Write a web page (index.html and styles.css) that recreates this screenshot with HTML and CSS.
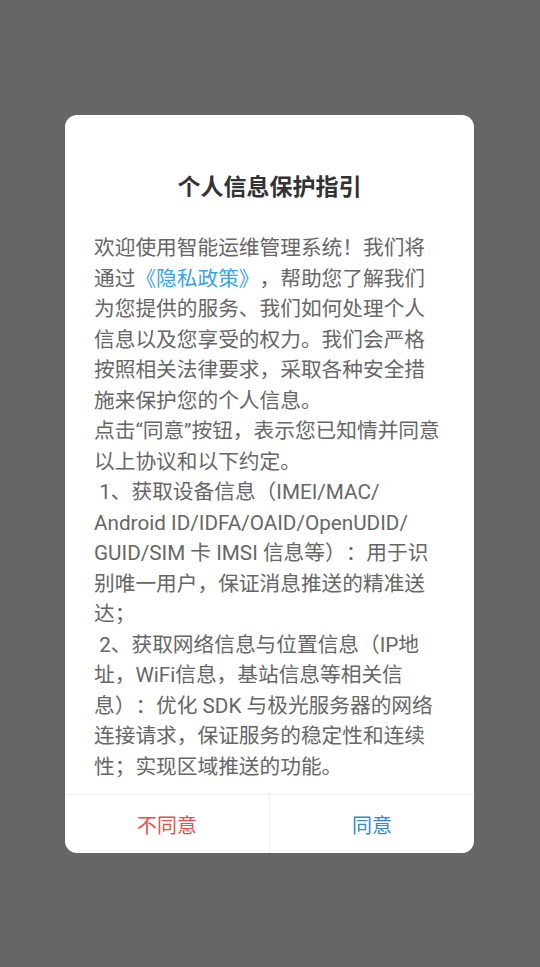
FILE: index.html
```html
<!DOCTYPE html>
<html lang="zh-CN">
<head>
<meta charset="utf-8">
<title>个人信息保护指引</title>
<link rel="stylesheet" href="styles.css">
</head>
<body>
<div class="dialog">
  <h1 class="title">个人信息保护指引</h1>
  <div class="content">
    <span class="line">欢迎使用智能运维管理系统！我们将</span>
    <span class="line">通过<a class="link">《隐私政策》</a>，帮助您了解我们</span>
    <span class="line">为您提供的服务、我们如何处理个人</span>
    <span class="line">信息以及您享受的权力。我们会严格</span>
    <span class="line">按照相关法律要求，采取各种安全措</span>
    <span class="line">施来保护您的个人信息。</span>
    <span class="line">点击“同意”按钮，表示您已知情并同意</span>
    <span class="line">以上协议和以下约定。</span>
    <span class="line"> 1、获取设备信息（IMEI/MAC/</span>
    <span class="line">Android ID/IDFA/OAID/OpenUDID/</span>
    <span class="line">GUID/SIM 卡 IMSI 信息等）：用于识</span>
    <span class="line">别唯一用户，保证消息推送的精准送</span>
    <span class="line">达；</span>
    <span class="line"> 2、获取网络信息与位置信息（IP地</span>
    <span class="line">址，WiFi信息，基站信息等相关信</span>
    <span class="line">息）：优化 SDK 与极光服务器的网络</span>
    <span class="line">连接请求，保证服务的稳定性和连续</span>
    <span class="line">性；实现区域推送的功能。</span>
  </div>
  <div class="actions">
    <button class="btn btn-decline">不同意</button>
    <button class="btn btn-accept">同意</button>
  </div>
</div>
</body>
</html>
```
FILE: styles.css
```css
html, body {
  margin: 0;
  padding: 0;
}
body {
  background: #666666;
  width: 540px;
  height: 967px;
  padding-top: 115px;
  box-sizing: border-box;
  font-family: Roboto, "Noto Sans CJK SC", sans-serif;
  text-spacing-trim: space-all;
}
.dialog {
  margin-left: 65px;
  width: 409px;
  height: 738px;
  background: #ffffff;
  border-radius: 12px;
  display: flex;
  flex-direction: column;
  overflow: hidden;
}
.title {
  margin: 0;
  padding-top: 58px;
  font-size: 23px;
  line-height: 30px;
  font-weight: bold;
  color: #333333;
  text-align: center;
}
.content {
  margin-top: 30px;
  padding: 0 20px 0 29px;
  font-size: 20.7px;
  line-height: 30.5px;
  color: #666666;
}
.line {
  display: block;
  white-space: pre;
}
.link {
  color: #3ba3e6;
}
.actions {
  margin-top: auto;
  height: 58px;
  border-top: 1px solid #efefef;
  display: flex;
}
.btn {
  flex: 1;
  border: 0;
  background: transparent;
  font-family: inherit;
  font-size: 20px;
  padding: 0;
}
.btn-decline {
  color: #e2524a;
  border-right: 1px solid #efefef;
}
.btn-accept {
  color: #2f88d6;
}
```
